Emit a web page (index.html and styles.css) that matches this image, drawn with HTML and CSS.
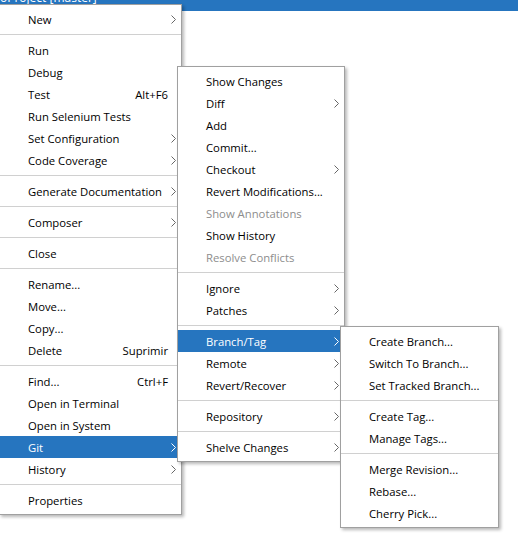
FILE: index.html
```html
<!DOCTYPE html>
<html>
<head>
<meta charset="utf-8">
<link rel="stylesheet" href="styles.css">
</head>
<body>
<div class="titlebar"><span class="title">oProject [master]</span></div>

<div class="menu m1">
  <div class="item"><span class="lbl">New</span><svg class="arr" viewBox="0 0 5 9"><path d="M0.5 0.5 L4.5 4.5 L0.5 8.5"/></svg></div>
  <div class="sep"></div>
  <div class="item"><span class="lbl">Run</span></div>
  <div class="item"><span class="lbl">Debug</span></div>
  <div class="item"><span class="lbl">Test</span><span class="sc">Alt+F6</span></div>
  <div class="item"><span class="lbl">Run Selenium Tests</span></div>
  <div class="item"><span class="lbl">Set Configuration</span><svg class="arr" viewBox="0 0 5 9"><path d="M0.5 0.5 L4.5 4.5 L0.5 8.5"/></svg></div>
  <div class="item"><span class="lbl">Code Coverage</span><svg class="arr" viewBox="0 0 5 9"><path d="M0.5 0.5 L4.5 4.5 L0.5 8.5"/></svg></div>
  <div class="sep"></div>
  <div class="item"><span class="lbl">Generate Documentation</span><svg class="arr" viewBox="0 0 5 9"><path d="M0.5 0.5 L4.5 4.5 L0.5 8.5"/></svg></div>
  <div class="sep"></div>
  <div class="item"><span class="lbl">Composer</span><svg class="arr" viewBox="0 0 5 9"><path d="M0.5 0.5 L4.5 4.5 L0.5 8.5"/></svg></div>
  <div class="sep"></div>
  <div class="item"><span class="lbl">Close</span></div>
  <div class="sep"></div>
  <div class="item"><span class="lbl">Rename...</span></div>
  <div class="item"><span class="lbl">Move...</span></div>
  <div class="item"><span class="lbl">Copy...</span></div>
  <div class="item"><span class="lbl">Delete</span><span class="sc">Suprimir</span></div>
  <div class="sep"></div>
  <div class="item"><span class="lbl">Find...</span><span class="sc">Ctrl+F</span></div>
  <div class="item"><span class="lbl">Open in Terminal</span></div>
  <div class="item"><span class="lbl">Open in System</span></div>
  <div class="item active"><span class="lbl">Git</span><svg class="arr" viewBox="0 0 5 9"><path d="M0.5 0.5 L4.5 4.5 L0.5 8.5"/></svg></div>
  <div class="item"><span class="lbl">History</span><svg class="arr" viewBox="0 0 5 9"><path d="M0.5 0.5 L4.5 4.5 L0.5 8.5"/></svg></div>
  <div class="sep"></div>
  <div class="item"><span class="lbl">Properties</span></div>
</div>

<div class="menu m2">
  <div class="item"><span class="lbl">Show Changes</span></div>
  <div class="item"><span class="lbl">Diff</span><svg class="arr" viewBox="0 0 5 9"><path d="M0.5 0.5 L4.5 4.5 L0.5 8.5"/></svg></div>
  <div class="item"><span class="lbl">Add</span></div>
  <div class="item"><span class="lbl">Commit...</span></div>
  <div class="item"><span class="lbl">Checkout</span><svg class="arr" viewBox="0 0 5 9"><path d="M0.5 0.5 L4.5 4.5 L0.5 8.5"/></svg></div>
  <div class="item"><span class="lbl">Revert Modifications...</span></div>
  <div class="item disabled"><span class="lbl">Show Annotations</span></div>
  <div class="item"><span class="lbl">Show History</span></div>
  <div class="item disabled"><span class="lbl">Resolve Conflicts</span></div>
  <div class="sep"></div>
  <div class="item"><span class="lbl">Ignore</span><svg class="arr" viewBox="0 0 5 9"><path d="M0.5 0.5 L4.5 4.5 L0.5 8.5"/></svg></div>
  <div class="item"><span class="lbl">Patches</span><svg class="arr" viewBox="0 0 5 9"><path d="M0.5 0.5 L4.5 4.5 L0.5 8.5"/></svg></div>
  <div class="sep"></div>
  <div class="item active"><span class="lbl">Branch/Tag</span><svg class="arr" viewBox="0 0 5 9"><path d="M0.5 0.5 L4.5 4.5 L0.5 8.5"/></svg></div>
  <div class="item"><span class="lbl">Remote</span><svg class="arr" viewBox="0 0 5 9"><path d="M0.5 0.5 L4.5 4.5 L0.5 8.5"/></svg></div>
  <div class="item"><span class="lbl">Revert/Recover</span><svg class="arr" viewBox="0 0 5 9"><path d="M0.5 0.5 L4.5 4.5 L0.5 8.5"/></svg></div>
  <div class="sep"></div>
  <div class="item"><span class="lbl">Repository</span><svg class="arr" viewBox="0 0 5 9"><path d="M0.5 0.5 L4.5 4.5 L0.5 8.5"/></svg></div>
  <div class="sep"></div>
  <div class="item"><span class="lbl">Shelve Changes</span><svg class="arr" viewBox="0 0 5 9"><path d="M0.5 0.5 L4.5 4.5 L0.5 8.5"/></svg></div>
</div>

<div class="menu m3">
  <div class="item"><span class="lbl">Create Branch...</span></div>
  <div class="item"><span class="lbl">Switch To Branch...</span></div>
  <div class="item"><span class="lbl">Set Tracked Branch...</span></div>
  <div class="sep"></div>
  <div class="item"><span class="lbl">Create Tag...</span></div>
  <div class="item"><span class="lbl">Manage Tags...</span></div>
  <div class="sep"></div>
  <div class="item"><span class="lbl">Merge Revision...</span></div>
  <div class="item"><span class="lbl">Rebase...</span></div>
  <div class="item"><span class="lbl">Cherry Pick...</span></div>
</div>
</body>
</html>
```

FILE: styles.css
```css
html, body {
  margin: 0;
  padding: 0;
  background: #ffffff;
  width: 518px;
  height: 536px;
  overflow: hidden;
}
body {
  position: relative;
  font-family: "Open Sans", "Noto Sans", sans-serif;
  font-size: 11.3px;
  color: #000;
}
.titlebar {
  height: 11px;
  background: #2675bf;
  overflow: hidden;
}
.title {
  display: block;
  color: #fff;
  font-size: 12px;
  line-height: 12px;
  margin-top: -8px;
  padding-left: 0;
  white-space: nowrap;
}
.menu {
  position: absolute;
  box-sizing: border-box;
  background: #fff;
  border: 1px solid #a0a0a0;
  padding: 3px 0;
  box-shadow: 2px 2px 3px rgba(0, 0, 0, 0.28);
}
.m1 { left: -1px; top: 4px; width: 183px; z-index: 1; }
.m2 { left: 177px; top: 66px; width: 168px; z-index: 2; }
.m3 { left: 340px; top: 326px; width: 159px; z-index: 3; }

.item {
  display: flex;
  align-items: center;
  height: 22px;
  padding: 0 5px 0 28px;
  white-space: nowrap;
}
.lbl { flex: 1; }
.sc { margin-right: 8px; }
.arr {
  width: 5px;
  height: 9px;
  flex: none;
}
.arr path {
  fill: none;
  stroke: #666;
  stroke-width: 1;
}
.item.active {
  background: #2675bf;
  color: #fff;
}
.item.active .arr path { stroke: #fff; }
.item.disabled { color: #8d8d8d; }
.sep {
  height: 9px;
  display: flex;
  flex-direction: column;
}
.sep::before {
  content: "";
  display: block;
  margin-top: 4px;
  height: 1px;
  background: #d0d0d0;
}
```
